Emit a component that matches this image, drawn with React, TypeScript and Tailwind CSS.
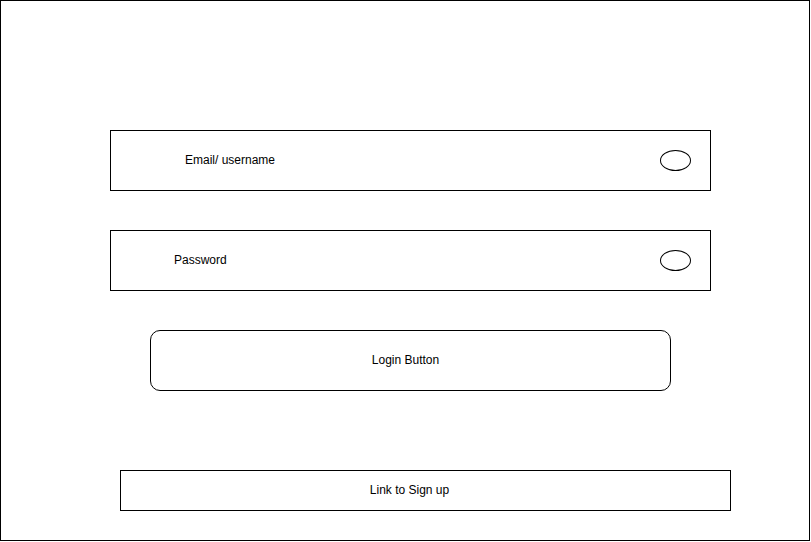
export default function App() {
  return (
    <div className="w-[811px] h-[542px] bg-white font-['Liberation_Sans',Arial,sans-serif] text-[12px] text-black">
      <div className="w-[810px] h-[541px] border border-black flex flex-col">
        {/* Email / username field */}
        <div className="mt-[129px] ml-[109px] w-[601px] h-[61px] border border-black flex items-center justify-between pl-[74px] pr-[19px]">
          <span className="leading-none -mt-[1px]">Email/ username</span>
          <span className="w-[31px] h-[21px] rounded-[50%] border border-black" />
        </div>

        {/* Password field */}
        <div className="mt-[39px] ml-[109px] w-[601px] h-[61px] border border-black flex items-center justify-between pl-[63px] pr-[19px]">
          <span className="leading-none -mt-[1px]">Password</span>
          <span className="w-[31px] h-[21px] rounded-[50%] border border-black" />
        </div>

        {/* Login */}
        <div className="mt-[39px] ml-[149px] w-[521px] h-[61px] border border-black rounded-[10px] flex items-center justify-center pr-[10px]">
          <span className="leading-none -mt-[1px]">Login Button</span>
        </div>

        {/* Sign up link */}
        <div className="mt-[79px] ml-[119px] w-[611px] h-[41px] border border-black flex items-center justify-center pr-[32px]">
          <span className="leading-none -mt-[1px]">Link to Sign up</span>
        </div>
      </div>
    </div>
  );
}
